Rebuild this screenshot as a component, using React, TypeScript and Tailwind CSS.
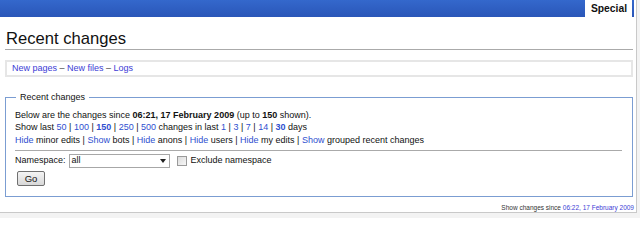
const Link: React.FC<{ children: React.ReactNode; bold?: boolean }> = ({ children, bold }) => (
  <a href="#" className={`text-[#2f4fcf] ${bold ? "font-bold" : ""}`}>
    {children}
  </a>
)

const Sep = () => <span> | </span>

export default function App() {
  return (
    <div className="w-[640px] h-[218px] overflow-hidden bg-[#f3f3f3] font-['Liberation_Sans',Arial,sans-serif] text-[#111]">
      <div className="w-[637px] h-[213px] bg-white border-r border-b border-[#c9c9c9] flex flex-col">
        <div className="h-[17px] mr-[2px] flex justify-end bg-gradient-to-b from-[#3468cc] to-[#2a56b8]">
          <div className="bg-white pl-[6px] pr-[5px] mr-[2px] text-[10.3px] leading-[17px] font-bold">Special</div>
        </div>

        <div className="mx-[5px] mr-[3px]">
          <h1 className="mt-[12px] text-[16.6px] leading-[20px] border-b border-[#aaaaaa] pl-[1px]">Recent changes</h1>

          <div className="mt-[10px] h-[17px] border-2 border-[#e6e6e6] pl-[5px] text-[9px] leading-[13px] text-[#444]">
            <a href="#" className="text-[#3d3dd6]">New pages</a> – <a href="#" className="text-[#3d3dd6]">New files</a> –{" "}
            <a href="#" className="text-[#3d3dd6]">Logs</a>
          </div>

          <fieldset className="mt-[14px] border border-[#7b9dd2] pl-[9px] pr-[9px] pb-[10px] text-[9px] leading-[12.7px]">
            <legend className="ml-[1px] px-[4px] text-[9px]">Recent changes</legend>
            <div className="mt-[5px]">
              Below are the changes since <b>06:21, 17 February 2009</b> (up to <b>150</b> shown).
            </div>
            <div>
              Show last <Link>50</Link>
              <Sep />
              <Link>100</Link>
              <Sep />
              <Link bold>150</Link>
              <Sep />
              <Link>250</Link>
              <Sep />
              <Link>500</Link> changes in last <Link>1</Link>
              <Sep />
              <Link>3</Link>
              <Sep />
              <Link>7</Link>
              <Sep />
              <Link>14</Link>
              <Sep />
              <Link bold>30</Link> days
            </div>
            <div>
              <Link>Hide</Link> minor edits <Sep />
              <Link>Show</Link> bots <Sep />
              <Link>Hide</Link> anons <Sep />
              <Link>Hide</Link> users <Sep />
              <Link>Hide</Link> my edits <Sep />
              <Link>Show</Link> grouped recent changes
            </div>
            <div className="mt-[3px] mr-[1px] border-t border-[#aaaaaa]" />
            <div className="mt-[3px] flex items-center h-[14px]">
              <span>Namespace:</span>
              <div className="ml-[3px] w-[101px] h-[14px] border border-[#a7a7a7] flex items-center justify-between pl-[2px] pr-[3px]">
                <span>all</span>
                <svg width="6" height="4" viewBox="0 0 6 4">
                  <path d="M0 0h6L3 4z" fill="#222" />
                </svg>
              </div>
              <span className="ml-[7px] w-[10px] h-[10px] border border-[#9a9a9a] bg-gradient-to-br from-[#dcdcdc] to-[#f7f7f7]" />
              <span className="ml-[4px]">Exclude namespace</span>
            </div>
            <button className="mt-[3px] ml-[2px] w-[28px] h-[15px] border border-[#707070] rounded-[2px] bg-gradient-to-b from-[#f4f4f4] to-[#d8d8d8] text-[9.5px] leading-[13px] flex items-center justify-center">
              Go
            </button>
          </fieldset>

          <div className="mt-[5px] text-right text-[6.5px] leading-[11px] -mr-[1px] text-[#333]">
            Show changes since <a href="#" className="text-[#3d3dd6]">06:22, 17 February 2009</a>
          </div>
        </div>
      </div>
    </div>
  )
}
